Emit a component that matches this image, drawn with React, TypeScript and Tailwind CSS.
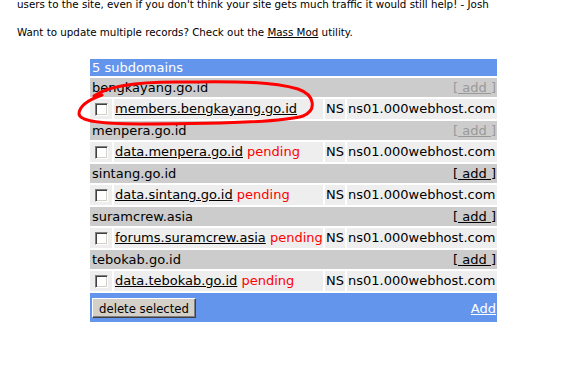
const groups = [
  { zone: 'bengkayang.go.id', sub: 'members.bengkayang.go.id', pending: false, dim: true },
  { zone: 'menpera.go.id', sub: 'data.menpera.go.id', pending: true, dim: true },
  { zone: 'sintang.go.id', sub: 'data.sintang.go.id', pending: true, dim: false },
  { zone: 'suramcrew.asia', sub: 'forums.suramcrew.asia', pending: true, dim: false },
  { zone: 'tebokab.go.id', sub: 'data.tebokab.go.id', pending: true, dim: false },
]

function Checkbox() {
  return (
    <div className="w-[13px] h-[13px] bg-white border border-t-[#808080] border-l-[#808080] border-b-white border-r-white shadow-[inset_1px_1px_0_#404040,inset_-1px_-1px_0_#d4d0c8]" />
  )
}

export default function App() {
  return (
    <div
      className="relative w-[562px] h-[366px] overflow-hidden bg-white text-black"
      style={{ fontFamily: '"DejaVu Sans", Verdana, sans-serif' }}
    >
      <div className="pl-[17px] text-[10.3px] leading-[14px]">
        <p className="mt-[-3px] mb-[14px] whitespace-nowrap">
          users to the site, even if you don't think your site gets much traffic it would still help! - Josh
        </p>
        <p className="whitespace-nowrap">
          Want to update multiple records? Check out the <span className="underline">Mass Mod</span> utility.
        </p>
      </div>

      {/* subdomain table */}
      <div className="ml-[90px] mt-[20px] w-[407px] grid grid-cols-[22px_209px_20px_150px] gap-[2px] text-[13px]">
        <div className="col-span-4 h-[17px] leading-[17px] bg-[#6495ed] text-white pl-[2px]">5 subdomains</div>

        {groups.map((g) => (
          <div key={g.zone} className="contents">
            <div className="col-span-4 h-[19px] leading-[19px] bg-[#cccccc] flex justify-between pl-[2px] pr-[1px]">
              <span>{g.zone}</span>
              <span className={g.dim ? 'underline text-[#999999]' : 'underline'}>[ add ]</span>
            </div>
            <div className="h-[20px] bg-[#eeeeee] flex items-center justify-center pt-[1px]">
              <Checkbox />
            </div>
            <div className="h-[20px] leading-[20px] bg-[#eeeeee] pl-[1px] whitespace-nowrap">
              <span className="underline">{g.sub}</span>
              {g.pending && <span className="text-[#ff0000]"> pending</span>}
            </div>
            <div className="h-[20px] leading-[20px] bg-[#eeeeee] pl-[1px]">NS</div>
            <div className="h-[20px] leading-[20px] bg-[#eeeeee] pl-[1px] whitespace-nowrap">ns01.000webhost.com</div>
          </div>
        ))}

        <div className="col-span-4 h-[29px] bg-[#6495ed] flex justify-between items-start pl-[2px] pr-[1px]">
          <button
            className="mt-[5px] w-[104px] h-[20px] bg-[#d4d0c8] text-[13px] leading-none border border-t-white border-l-white border-b-[#404040] border-r-[#404040] shadow-[inset_-1px_-1px_0_#808080]"
            style={{ fontFamily: '"DejaVu Sans Condensed", "Liberation Sans", sans-serif' }}
          >
            delete selected
          </button>
          <span className="mt-[7px] leading-[17px] text-white underline">Add</span>
        </div>
      </div>

      {/* hand-drawn red circle */}
      <svg className="absolute inset-0 pointer-events-none" width="562" height="366" viewBox="0 0 562 366">
        <path
          d="M 94 96 C 108 86, 135 82, 175 82 C 225 82, 265 80, 298 89 C 315 95, 317 110, 303 116 C 282 122, 210 124, 140 124 C 100 124, 80 121, 79 114 C 79 106, 88 100, 102 95"
          fill="none"
          stroke="#ff0000"
          strokeWidth="3"
          strokeLinecap="round"
        />
      </svg>
    </div>
  )
}
